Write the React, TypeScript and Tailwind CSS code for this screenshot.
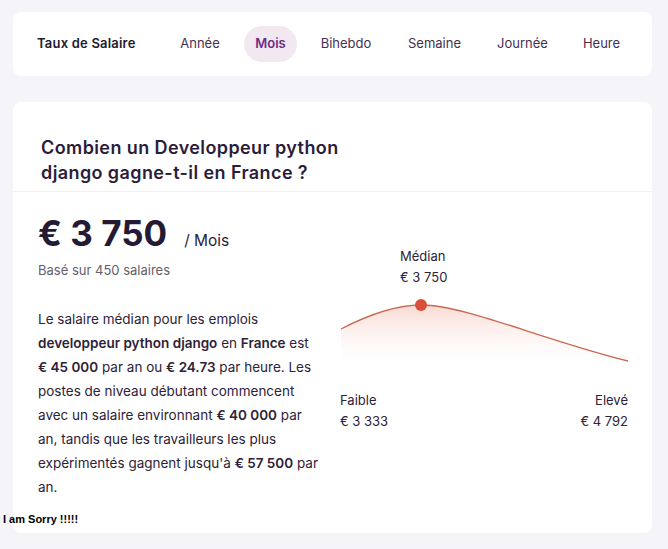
import React from "react";

const navItems: { label: string; w: string }[] = [
  { label: "Année", w: "w-[70px]" },
  { label: "Mois", w: "w-[71px]" },
  { label: "Bihebdo", w: "w-[80px]" },
  { label: "Semaine", w: "w-[97px]" },
  { label: "Journée", w: "w-[79px]" },
  { label: "Heure", w: "w-[79px]" },
];

function SalaryCurve() {
  return (
    <svg width="290" height="76" viewBox="0 0 290 76" className="block">
      <defs>
        <linearGradient id="curveFill" x1="0" y1="0" x2="0" y2="1">
          <stop offset="0%" stopColor="#f6c9c0" stopOpacity="0.7" />
          <stop offset="100%" stopColor="#ffffff" stopOpacity="0" />
        </linearGradient>
      </defs>
      <path
        d="M1 34 C 28 20 55 10 81 10 C 125 10 200 44 288 66 L 288 76 L 1 76 Z"
        fill="url(#curveFill)"
      />
      <path
        d="M1 34 C 28 20 55 10 81 10 C 125 10 200 44 288 66"
        fill="none"
        stroke="#c9684f"
        strokeWidth="1.3"
      />
      <circle cx="81" cy="10" r="6" fill="#d9503a" />
    </svg>
  );
}

export default function App() {
  return (
    <div
      className="relative min-h-[549px] bg-[#f5f5f9] pl-[13px] pr-[16px] pt-[12px] pb-[17px] text-[#2b1d3a]"
      style={{ fontFamily: "Inter, 'Open Sans', sans-serif" }}
    >
      {/* Top nav */}
      <div className="flex h-[64px] items-center rounded-lg bg-white pl-[24px]">
        <span className="w-[128px] text-[13px] font-semibold tracking-[0.2px] text-[#231a2e]">Taux de Salaire</span>
        <nav className="flex items-center">
          {navItems.map((item) => (
            <div key={item.label} className={`flex justify-center ${item.w}`}>
              <button
                className={
                  item.label === "Mois"
                    ? "h-[36px] rounded-full bg-[#f1e8f2] px-[11px] text-[13px] font-semibold text-[#6e2c80]"
                    : "h-[36px] px-[4px] text-[13px] text-[#45304f]"
                }
              >
                {item.label}
              </button>
            </div>
          ))}
        </nav>
      </div>

      {/* Main card */}
      <div className="mt-[26px] rounded-lg bg-white pb-[34px]">
        <div className="border-b border-[#f0eff3] px-[28px] pt-[33px] pb-[6px]">
          <h1 className="text-[18px] font-semibold leading-[25px] tracking-[0.4px] text-[#2b1d3a]">
            Combien un Developpeur python
            <br />
            django gagne-t-il en France ?
          </h1>
        </div>

        <div className="flex pl-[25px]">
          <div className="w-[302px] pt-[18px]">
            <div className="flex items-baseline">
              <span className="text-[35px] font-bold leading-[46px] text-[#241a33]">€ 3 750</span>
              <span className="ml-[17px] text-[15.5px] text-[#2b1d3a]">/ Mois</span>
            </div>
            <p className="mt-[4px] text-[13px] leading-[20px] text-[#66606c]">Basé sur 450 salaires</p>
            <p className="mt-[27px] text-[13.5px] leading-[24px] text-[#2e2238]">
              Le salaire médian pour les emplois
              <br />
              <b className="font-semibold">developpeur python django</b> en{" "}
              <b className="font-semibold">France</b> est
              <br />
              <b className="font-semibold">€ 45 000</b> par an ou <b className="font-semibold">€ 24.73</b> par heure. Les
              <br />
              postes de niveau débutant commencent
              <br />
              avec un salaire environnant <b className="font-semibold">€ 40 000</b> par
              <br />
              an, tandis que les travailleurs les plus
              <br />
              expérimentés gagnent jusqu'à <b className="font-semibold">€ 57 500</b> par
              <br />
              an.
            </p>
          </div>

          <div className="w-[290px] pt-[54px]">
            <div className="pl-[60px] text-[13px] leading-[21px] text-[#2e2238]">
              <div>Médian</div>
              <div>€ 3 750</div>
            </div>
            <div className="mt-[7px]">
              <SalaryCurve />
            </div>
            <div className="mt-[19px] flex justify-between pr-[2px] text-[13px] leading-[21px] text-[#2e2238]">
              <div>
                <div>Faible</div>
                <div>€ 3 333</div>
              </div>
              <div className="text-right">
                <div>Elevé</div>
                <div>€ 4 792</div>
              </div>
            </div>
          </div>
        </div>
      </div>

      <span
        className="absolute left-[3px] top-[511px] text-[11px] font-bold text-black"
        style={{ fontFamily: "'Liberation Sans', Arial, sans-serif" }}
      >
        I am Sorry !!!!!
      </span>
    </div>
  );
}
